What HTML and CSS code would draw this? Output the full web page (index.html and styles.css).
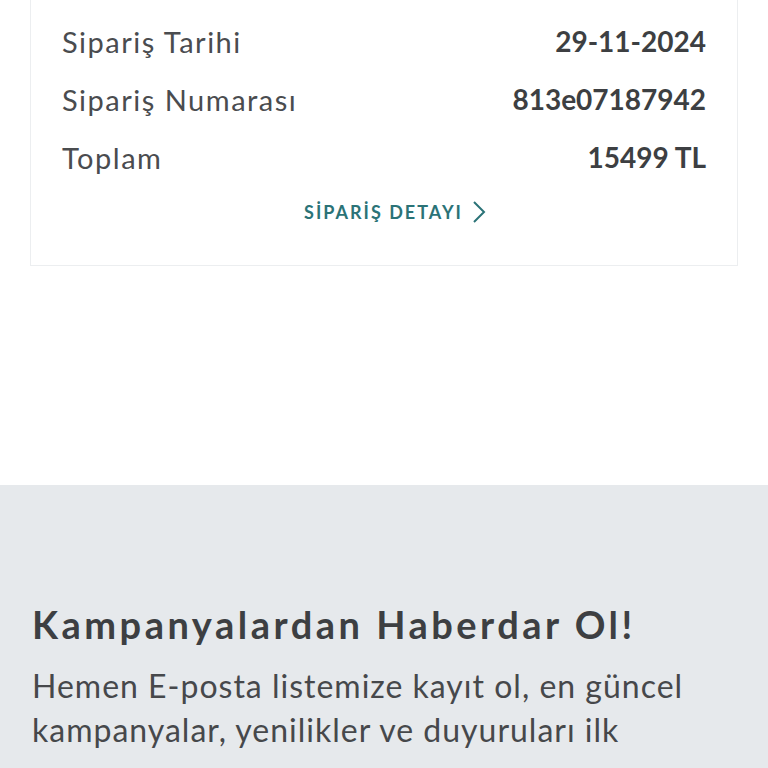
FILE: index.html
```html
<!DOCTYPE html>
<html lang="tr">
<head>
<meta charset="utf-8">
<link rel="stylesheet" href="styles.css">
</head>
<body>
<div class="top">
  <div class="card">
    <div class="row"><span class="label">Sipariş Tarihi</span><span class="value">29-11-2024</span></div>
    <div class="row"><span class="label">Sipariş Numarası</span><span class="value">813e07187942</span></div>
    <div class="row"><span class="label">Toplam</span><span class="value">15499 TL</span></div>
    <a class="detail" href="#">SİPARİŞ DETAYI
      <svg class="chev" width="14" height="24" viewBox="0 0 14 24"><path d="M2 2 L12 12 L2 22" fill="none" stroke="#2b7377" stroke-width="2"/></svg>
    </a>
  </div>
</div>
<section class="news">
  <h2 class="news-title">Kampanyalardan Haberdar Ol!</h2>
  <p class="news-text">Hemen E-posta listemize kayıt ol, en güncel kampanyalar, yenilikler ve duyuruları ilk</p>
</section>
</body>
</html>
```
FILE: styles.css
```css
html, body { margin: 0; padding: 0; }
body { font-family: Lato, "Open Sans", sans-serif; background: #fff; color: #3d3f42; width: 768px; overflow: hidden; }
.top { padding: 0 30px; height: 485px; box-sizing: border-box; }
.card { border: 1px solid #eceef0; border-top: none; padding: 12px 31px 0 31px; height: 266px; box-sizing: border-box; display: flex; flex-direction: column; }
.row { display: flex; justify-content: space-between; align-items: center; height: 58px; }
.label { font-size: 29px; color: #4a4c4f; font-weight: 400; letter-spacing: 1.5px; }
.value { font-size: 28px; font-weight: 700; color: #3d3f42; }
.detail { align-self: center; margin-top: 14px; margin-left: 22px; display: flex; align-items: center; gap: 9px; text-decoration: none; color: #2b7377; font-weight: 700; font-size: 18px; letter-spacing: 2px; }
.chev { display: block; }
.news { background: #e6e9ec; height: 283px; padding: 117px 32px 0 32px; box-sizing: border-box; }
.news-title { margin: 0; font-size: 38px; font-weight: 700; letter-spacing: 3.5px; color: #3d3f42; line-height: 44px; }
.news-text { margin: 18px 0 0 0; font-size: 32px; line-height: 44px; color: #46484b; letter-spacing: 1px; }
```
